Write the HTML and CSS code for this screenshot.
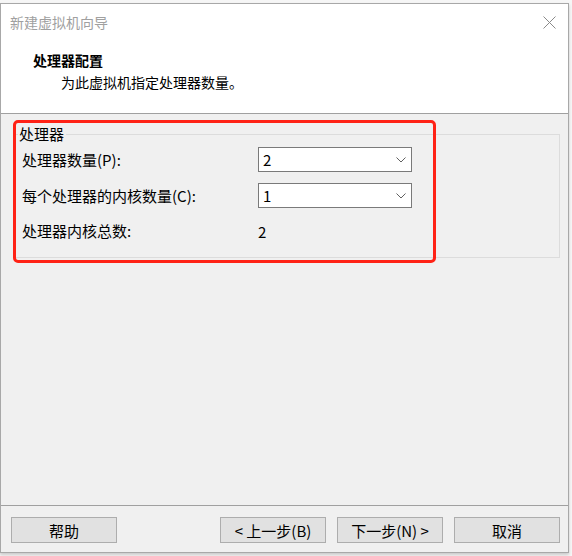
FILE: index.html
```html
<!DOCTYPE html>
<html lang="zh-CN">
<head>
<meta charset="utf-8">
<title>新建虚拟机向导</title>
<link rel="stylesheet" href="styles.css">
</head>
<body>
<div class="window">
  <div class="titlebar">
    <span class="title">新建虚拟机向导</span>
    <svg class="close" width="13" height="13" viewBox="0 0 13 13"><path d="M0.5 0.5 L12.5 12.5 M12.5 0.5 L0.5 12.5" stroke="#8a8a8a" stroke-width="1" fill="none"/></svg>
  </div>
  <div class="header">
    <div class="h-title">处理器配置</div>
    <div class="h-sub">为此虚拟机指定处理器数量。</div>
  </div>
  <div class="content">
    <div class="group">
      <span class="legend">处理器</span>
      <div class="row">
        <span class="label">处理器数量(P):</span>
        <div class="select"><span>2</span><svg class="chev" width="10" height="6" viewBox="0 0 10 6"><path d="M0.5 0.5 L5 5 L9.5 0.5" stroke="#606060" fill="none"/></svg></div>
      </div>
      <div class="row">
        <span class="label">每个处理器的内核数量(C):</span>
        <div class="select"><span>1</span><svg class="chev" width="10" height="6" viewBox="0 0 10 6"><path d="M0.5 0.5 L5 5 L9.5 0.5" stroke="#606060" fill="none"/></svg></div>
      </div>
      <div class="row total">
        <span class="label">处理器内核总数:</span>
        <span class="value">2</span>
      </div>
    </div>
    <div class="highlight"></div>
  </div>
  <div class="footer">
    <button class="btn">帮助</button>
    <div class="spacer"></div>
    <button class="btn">&lt; 上一步(B)</button>
    <button class="btn">下一步(N) &gt;</button>
    <button class="btn">取消</button>
  </div>
</div>
</body>
</html>
```
FILE: styles.css
```css
html, body {
  margin: 0;
  padding: 0;
}
body {
  background: #f6f6f6;
  width: 572px;
  height: 556px;
  overflow: hidden;
  font-family: "Microsoft YaHei", "Noto Sans CJK SC", sans-serif;
  color: #000;
}
.window {
  margin-top: 3px;
  width: 567px;
  height: 548px;
  border: 1px solid #a8a8a8;
  background: #f0f0f0;
  display: flex;
  flex-direction: column;
  box-shadow: 0 2px 3px rgba(0,0,0,0.18);
}
.titlebar {
  height: 36px;
  background: #fff;
  display: flex;
  align-items: center;
  justify-content: space-between;
  padding: 0 12px 0 9px;
}
.title {
  font-size: 14px;
  line-height: 36px;
  color: #a0a0a0;
}
.close {
  display: block;
}
.header {
  background: #fff;
  border-bottom: 1px solid #a0a0a0;
  box-sizing: border-box;
  height: 74px;
  padding: 9px 0 0 32px;
}
.h-title {
  font-size: 14px;
  font-weight: bold;
  line-height: 22px;
}
.h-sub {
  font-size: 14px;
  line-height: 22px;
  padding-left: 28px;
}
.content {
  flex: 1;
  position: relative;
  padding: 20px 8px 0 13px;
}
.group {
  border: 1px solid #dcdcdc;
  position: relative;
  padding: 12px 0 0 7px;
  box-sizing: content-box;
  height: 110px;
}
.legend {
  position: absolute;
  top: -10px;
  left: 3px;
  background: #f0f0f0;
  font-size: 15px;
  line-height: 18px;
  padding: 0 2px 0 1px;
}
.row {
  display: flex;
  align-items: center;
  height: 25px;
  margin-bottom: 11px;
}
.row.total {
  margin-top: 3px;
  height: 24px;
}
.label {
  width: 236px;
  font-size: 15px;
  line-height: 20px;
}
.select {
  height: 23px;
  border: 1px solid #7a7a7a;
  background: #fff;
  display: flex;
  align-items: center;
  justify-content: space-between;
  padding: 0 5px 0 4px;
  box-sizing: content-box;
  width: 143px;
  font-size: 15px;
}
.chev {
  display: block;
}
.value {
  font-size: 15px;
}
.highlight {
  position: absolute;
  left: 12px;
  top: 6px;
  width: 417px;
  height: 137px;
  border: 3px solid #ff2216;
  border-radius: 5px;
}
.footer {
  border-top: 1px solid #a0a0a0;
  display: flex;
  padding: 11px 8px 9px 10px;
  gap: 11px;
}
.spacer {
  flex: 1;
}
.btn {
  width: 106px;
  height: 26px;
  margin: 0;
  padding: 0;
  background: #e1e1e1;
  border: 1px solid #adadad;
  font-family: inherit;
  font-size: 15px;
  color: #000;
}
```
